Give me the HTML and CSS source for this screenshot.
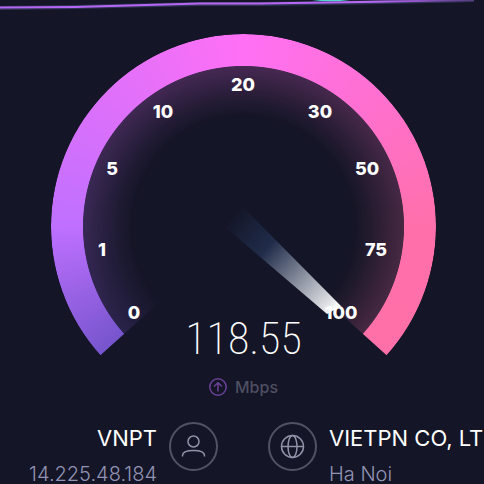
FILE: index.html
```html
<!DOCTYPE html>
<html lang="en">
<head>
<meta charset="utf-8">
<title>Speed test</title>
<link rel="stylesheet" href="styles.css">
</head>
<body>
<main class="page">
  <svg class="trace" viewBox="0 0 484 34" preserveAspectRatio="none" aria-hidden="true">
    <defs>
      <linearGradient id="trace-fade" gradientUnits="userSpaceOnUse" x1="0" y1="0" x2="484" y2="0">
        <stop offset="0" stop-color="#b565f4"/>
        <stop offset=".78" stop-color="#b967f5"/>
        <stop offset="1" stop-color="#4c3674"/>
      </linearGradient>
    </defs>
    <path class="trace-glow" d="M0 8 L75 7 L200 4 L260 4 L360 2.500 L474 0"/>
    <path class="trace-download" d="M312 -1 Q330 1.500 350 -1"/>
    <path class="trace-upload" d="M0 7.500 L75 7 L200 3.500 L260 3.500 L360 2 L474 0"/>
  </svg>

  <section class="gauge">
    <div class="glow"></div>
    <div class="ring"></div>
    <svg class="dial" viewBox="0 0 385 385">
      <defs>
        <linearGradient id="needle" gradientUnits="userSpaceOnUse" x1="180" y1="181" x2="284" y2="276">
          <stop offset="0" stop-color="#1f2d4c" stop-opacity="0"/>
          <stop offset=".35" stop-color="#202c4a"/>
          <stop offset=".95" stop-color="#e6e7ea"/>
          <stop offset="1" stop-color="#fff"/>
        </linearGradient>
      </defs>
      <polygon fill="url(#needle)" points="174,193 191,172 290,272 276,280"/>
      <g class="marks">
        <text x="83" y="285">0</text>
        <text x="51" y="222">1</text>
        <text x="61" y="141">5</text>
        <text x="112" y="84">10</text>
        <text x="192" y="57">20</text>
        <text x="269" y="84">30</text>
        <text x="316" y="141">50</text>
        <text x="325" y="222">75</text>
        <text x="290" y="285">100</text>
      </g>
    </svg>
    <div class="readout">
      <div class="speed">118.55</div>
      <div class="unit">
        <svg class="unit-icon" viewBox="0 0 18 18" aria-hidden="true">
          <circle cx="9" cy="9" r="8.200"/>
          <path d="M9 13.500V5M5 8.500L9 4.800L13 8.500"/>
        </svg>
        <span>Mbps</span>
      </div>
    </div>
  </section>

  <section class="hosts">
    <div class="host host-client">
      <div class="host-text">
        <div class="host-name">VNPT</div>
        <div class="host-detail">14.225.48.184</div>
      </div>
      <svg class="host-icon" viewBox="0 0 49 49" aria-hidden="true">
        <circle class="rim" cx="24.500" cy="24.500" r="23.500"/>
        <circle cx="24.500" cy="19.500" r="5.500"/>
        <path d="M13.500 34.500V33.500Q13.500 28.500 24.500 28.500T35.500 33.500V34.500"/>
      </svg>
    </div>
    <div class="host">
      <svg class="host-icon" viewBox="0 0 49 49" aria-hidden="true">
        <circle class="rim" cx="24.500" cy="24.500" r="23.500"/>
        <circle cx="24.500" cy="24.500" r="11"/>
        <ellipse cx="24.500" cy="24.500" rx="4.500" ry="11"/>
        <path d="M13.500 24.500H35.500"/>
      </svg>
      <div class="host-text">
        <div class="host-name">VIETPN CO, LTD</div>
        <div class="host-detail">Ha Noi</div>
      </div>
    </div>
  </section>
</main>
</body>
</html>
```
FILE: styles.css
```css
* {
  box-sizing: border-box;
}

body {
  margin: 0;
  background: #141526;
  color: #fff;
  font-family: Inter, "Open Sans", sans-serif;
}

.page {
  height: 100vh;
  overflow: hidden;
}

.trace {
  display: block;
  width: 100%;
  height: 34px;
  fill: none;
}

.trace-glow {
  stroke: #303456;
  stroke-width: 4;
}

.trace-upload {
  stroke: url(#trace-fade);
  stroke-width: 2;
}

.trace-download {
  stroke: #4fd8cf;
  stroke-width: 2;
}

.gauge {
  display: grid;
  width: 100%;
  max-width: 388px;
  margin: 0 auto;
  padding-left: 3px;
}

.gauge > * {
  grid-area: 1 / 1;
}

.ring,
.glow {
  aspect-ratio: 1;
  border-radius: 50%;
  background: conic-gradient(from 228deg, #7655cd 0deg, #bf70ff 42deg, #ff70f5 132deg, #ff70ab 222deg, #ff70a8 264deg, #ff70a8 312deg, #7655cd 312deg);
  clip-path: polygon(50% 50%, -5% 99.500%, -5% -5%, 105% -5%, 105% 99.500%);
}

.ring {
  -webkit-mask: radial-gradient(closest-side, transparent 83.200%, #000 83.600%);
  mask: radial-gradient(closest-side, transparent 83.200%, #000 83.600%);
}

.glow {
  -webkit-mask: radial-gradient(closest-side, transparent 57%, rgba(0, 0, 0, 0.080) 67%, rgba(0, 0, 0, 0.220) 83.400%, transparent 83.600%);
  mask: radial-gradient(closest-side, transparent 57%, rgba(0, 0, 0, 0.080) 67%, rgba(0, 0, 0, 0.220) 83.400%, transparent 83.600%);
}

.dial {
  display: block;
  width: 100%;
  z-index: 1;
}

.marks {
  fill: #fff;
  font-size: 18px;
  font-weight: 800;
  text-anchor: middle;
}

.readout {
  align-self: end;
  display: flex;
  flex-direction: column;
  align-items: center;
  gap: 8px;
  padding-bottom: 20px;
}

.speed {
  font-family: "Roboto Condensed", "Open Sans Condensed", Roboto, sans-serif;
  font-size: 44px;
  font-weight: 200;
  line-height: 56px;
}

.unit {
  display: flex;
  align-items: center;
  gap: 8px;
  color: #4e4f62;
  font-size: 16px;
  font-weight: 500;
  line-height: 24px;
}

.unit-icon {
  width: 18px;
  height: 18px;
  fill: none;
  stroke: #6b4199;
  stroke-width: 1.500;
}

.hosts {
  display: grid;
  grid-template-columns: minmax(0, 1fr) minmax(0, 1fr);
  gap: 50px;
  padding: 1px 0 0 2px;
}

.host {
  display: flex;
  gap: 12px;
  white-space: nowrap;
}

.host-client {
  justify-content: flex-end;
  text-align: right;
}

.host-icon {
  flex: none;
  width: 49px;
  height: 49px;
  margin-top: 2px;
  fill: none;
  stroke: #9192a8;
  stroke-width: 1.500;
}

.host-icon .rim {
  stroke: #515263;
  stroke-width: 2;
}

.host-name {
  font-size: 22px;
  line-height: 36px;
}

.host-detail {
  color: #9293b4;
  font-size: 20px;
  font-weight: 300;
  line-height: 36px;
}
```
